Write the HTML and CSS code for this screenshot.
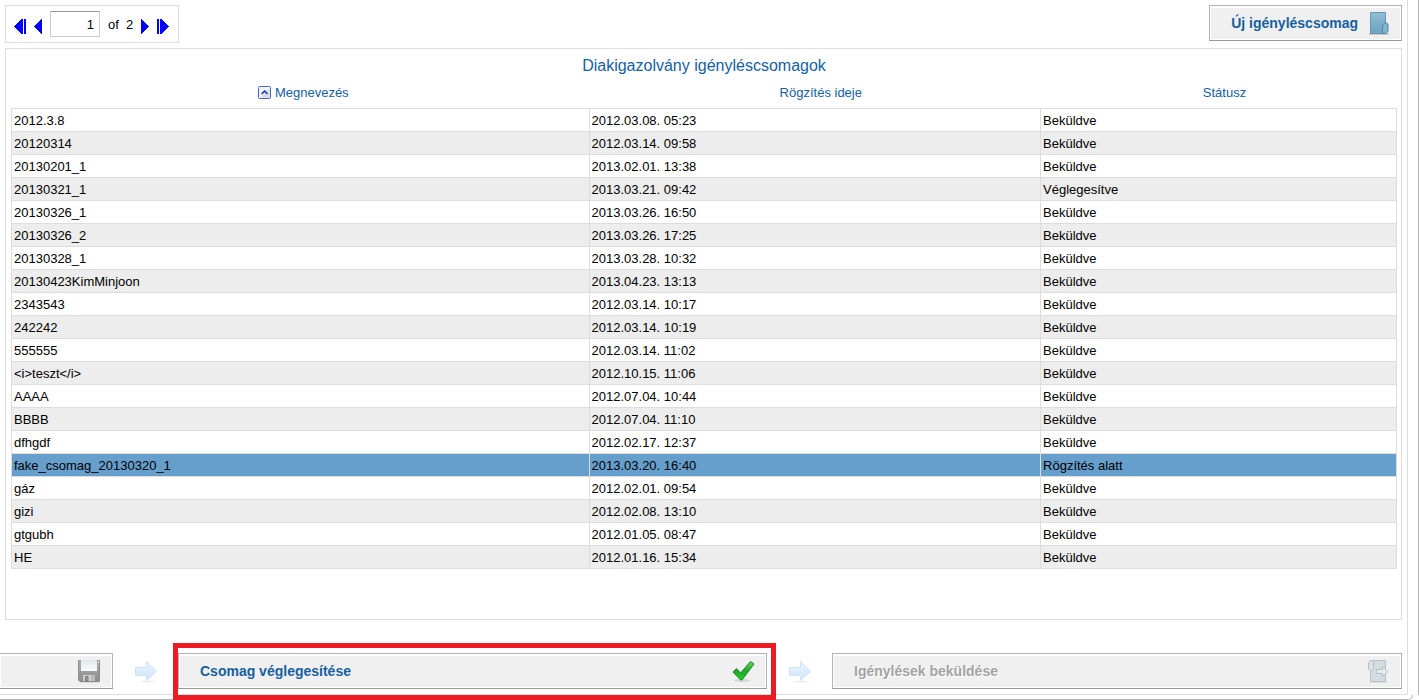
FILE: index.html
```
<!DOCTYPE html>
<html lang="hu">
<head>
<meta charset="utf-8">
<title>Diakigazolvány igényléscsomagok</title>
<link rel="stylesheet" href="styles.css">
</head>
<body>
<div class="window">
  <main class="frame">
    <div class="toolbar">
      <nav class="pager" aria-label="Lapozó">
        <button class="page-btn" aria-label="Első oldal"><svg width="12" height="15" viewBox="0 0 12 15" shape-rendering="crispEdges"><path d="M8 0V15L0 7.500ZM8 0H9V15H8ZM10 0H12V15H10Z"/></svg></button>
        <button class="page-btn" aria-label="Előző oldal"><svg width="8" height="15" viewBox="0 0 8 15" shape-rendering="crispEdges"><path d="M8 0V15L0 7.500Z"/></svg></button>
        <input class="page-input" type="text" value="1" aria-label="Oldal">
        <span class="page-total">of&nbsp; 2</span>
        <button class="page-btn" aria-label="Következő oldal"><svg width="8" height="15" viewBox="0 0 8 15" shape-rendering="crispEdges"><path d="M0 0V15L8 7.500Z"/></svg></button>
        <button class="page-btn" aria-label="Utolsó oldal"><svg width="12" height="15" viewBox="0 0 12 15" shape-rendering="crispEdges"><path d="M0 0H2V15H0ZM3 0H4V15H3ZM4 0V15L12 7.500Z"/></svg></button>
      </nav>
      <button class="action new-package">
        <span>Új igényléscsomag</span>
        <svg class="icon" width="24" height="24" viewBox="0 0 24 24">
          <defs><linearGradient id="door" x1="0" y1="0" x2="0" y2="1"><stop offset="0" stop-color="#8fbdd4"/><stop offset="1" stop-color="#6fa3c2"/></linearGradient></defs>
          <path d="M2 23H22" stroke="#c4bcb8" stroke-width="1.500"/>
          <path d="M3.500 1.500H18.500V22.500H3.500Z" fill="url(#door)" stroke="#6797b5"/>
          <path d="M15.500 22.500V15L18 11.500L21 13V20L19 22.500Z" fill="#86b4cd" stroke="#4f87a8"/>
        </svg>
      </button>
    </div>

    <section class="panel">
      <table class="packages">
        <caption>Diakigazolvány igényléscsomagok</caption>
        <colgroup><col class="col-name"><col class="col-time"><col class="col-status"></colgroup>
        <thead>
          <tr>
            <th scope="col"><button class="sort"><svg width="13" height="13" viewBox="0 0 13 13"><rect x=".5" y=".5" width="12" height="12" rx="1" fill="#f4f4f8" stroke="#4668cf"/><path d="M7 4H12V12H4V9Z" fill="#dcdce4"/><path d="M3.500 8L6.500 5L9.500 8" fill="none" stroke="#1c3aa8" stroke-width="1.500"/></svg>Megnevezés</button></th>
            <th scope="col">Rögzítés ideje</th>
            <th scope="col">Státusz</th>
          </tr>
        </thead>
        <tbody>
          <tr><td>2012.3.8</td><td>2012.03.08. 05:23</td><td>Beküldve</td></tr>
          <tr><td>20120314</td><td>2012.03.14. 09:58</td><td>Beküldve</td></tr>
          <tr><td>20130201_1</td><td>2013.02.01. 13:38</td><td>Beküldve</td></tr>
          <tr><td>20130321_1</td><td>2013.03.21. 09:42</td><td>Véglegesítve</td></tr>
          <tr><td>20130326_1</td><td>2013.03.26. 16:50</td><td>Beküldve</td></tr>
          <tr><td>20130326_2</td><td>2013.03.26. 17:25</td><td>Beküldve</td></tr>
          <tr><td>20130328_1</td><td>2013.03.28. 10:32</td><td>Beküldve</td></tr>
          <tr><td>20130423KimMinjoon</td><td>2013.04.23. 13:13</td><td>Beküldve</td></tr>
          <tr><td>2343543</td><td>2012.03.14. 10:17</td><td>Beküldve</td></tr>
          <tr><td>242242</td><td>2012.03.14. 10:19</td><td>Beküldve</td></tr>
          <tr><td>555555</td><td>2012.03.14. 11:02</td><td>Beküldve</td></tr>
          <tr><td>&lt;i&gt;teszt&lt;/i&gt;</td><td>2012.10.15. 11:06</td><td>Beküldve</td></tr>
          <tr><td>AAAA</td><td>2012.07.04. 10:44</td><td>Beküldve</td></tr>
          <tr><td>BBBB</td><td>2012.07.04. 11:10</td><td>Beküldve</td></tr>
          <tr><td>dfhgdf</td><td>2012.02.17. 12:37</td><td>Beküldve</td></tr>
          <tr class="selected"><td>fake_csomag_20130320_1</td><td>2013.03.20. 16:40</td><td>Rögzítés alatt</td></tr>
          <tr><td>gáz</td><td>2012.02.01. 09:54</td><td>Beküldve</td></tr>
          <tr><td>gizi</td><td>2012.02.08. 13:10</td><td>Beküldve</td></tr>
          <tr><td>gtgubh</td><td>2012.01.05. 08:47</td><td>Beküldve</td></tr>
          <tr><td>HE</td><td>2012.01.16. 15:34</td><td>Beküldve</td></tr>
        </tbody>
      </table>
    </section>

    <div class="steps">
      <button class="action save" aria-label="Mentés">
        <svg class="icon" width="24" height="24" viewBox="0 0 24 24">
          <defs><linearGradient id="disk" x1="0" y1="0" x2="0" y2="1"><stop offset="0" stop-color="#b0b0b0"/><stop offset="1" stop-color="#8c8c8c"/></linearGradient><linearGradient id="label" x1="0" y1="0" x2="0" y2="1"><stop offset="0" stop-color="#dfe7e7"/><stop offset="1" stop-color="#fbfdfd"/></linearGradient></defs>
          <path d="M2 23.500H22" stroke="#ddd"/>
          <path d="M1.500 1.500H22.500V22.500H3L1.500 21Z" fill="url(#disk)" stroke="#8c8c8c"/>
          <path d="M4 1H20V12H4Z" fill="url(#label)"/>
          <path d="M21 3H22" stroke="#eee" stroke-width="2"/>
          <path d="M6 16H18V22H6Z" fill="#d0d0d0"/>
          <path d="M8.500 17.500H11V22H8.500Z" fill="#a0a0a0" stroke="#777"/>
          <path d="M14 16H18V22H14Z" fill="#b9b9b9"/>
        </svg>
      </button>
      <svg class="arrow" width="24" height="24" viewBox="0 0 24 24">
        <defs><linearGradient id="sky" x1="0" y1="0" x2="0" y2="1"><stop offset="0" stop-color="#eef6ff"/><stop offset="1" stop-color="#cce3fb"/></linearGradient></defs>
        <ellipse cx="13" cy="21.500" rx="7" ry="1" fill="#eee"/>
        <path d="M1.500 7.500H12.500V1.500L22.500 11.500L12.500 20.500V15.500H1.500Z" fill="url(#sky)" stroke="#cfe3f8"/>
      </svg>
      <div class="step step-finalize">
        <button class="action">
          <span>Csomag véglegesítése</span>
          <svg class="icon" width="24" height="24" viewBox="0 0 24 24">
            <defs><linearGradient id="tick" x1="0" y1="0" x2="0" y2="1"><stop offset="0" stop-color="#62d862"/><stop offset=".5" stop-color="#23a52b"/><stop offset="1" stop-color="#17d422"/></linearGradient></defs>
            <ellipse cx="10" cy="21.500" rx="8" ry="1.500" fill="#d6d6d6"/>
            <path d="M1 13L4.500 9.500L8.500 14L18.500 2.500L22 5L10 21H8.500Z" fill="url(#tick)" stroke="#238a2b" stroke-linejoin="round"/>
          </svg>
        </button>
        <div class="highlight"></div>
      </div>
      <svg class="arrow" width="24" height="24" viewBox="0 0 24 24">
        <ellipse cx="13" cy="21.500" rx="7" ry="1" fill="#eee"/>
        <path d="M1.500 7.500H12.500V1.500L22.500 11.500L12.500 20.500V15.500H1.500Z" fill="url(#sky)" stroke="#cfe3f8"/>
      </svg>
      <div class="step step-submit">
        <button class="action" disabled>
          <span>Igénylések beküldése</span>
          <svg class="icon" width="24" height="24" viewBox="0 0 24 24">
            <path d="M2 23.500H21" stroke="#dedede"/>
            <path d="M3.500 1.500H18.500V22.500H3.500Z" fill="#d5dce0" stroke="#b3c1c8"/>
            <path d="M3.500 1.500H6.500V9.500L4 12.500L1.500 10V4Z" fill="#dce2e5" stroke="#b3c1c8"/>
            <path d="M9.500 10.500H15.500V7.500L21 12.500L15.500 17.500V14.500H9.500Z" fill="#e7ebed" stroke="#b3c1c8"/>
          </svg>
        </button>
      </div>
    </div>
  </main>
</div>
<div class="window-bottom"></div>
</body>
</html>
```
FILE: styles.css
```
* {
  box-sizing: border-box;
}

body {
  display: flex;
  flex-direction: column;
  min-height: 100vh;
  margin: 0;
  background: #fff;
  color: #000;
  font: 13px/16px "Liberation Sans", Arial, sans-serif;
}

button,
input {
  font: inherit;
  color: inherit;
}

.window {
  display: flex;
  flex: 1;
  padding-right: 10px;
  border-right: 1px solid #b3b3b3;
}

.window-bottom {
  height: 5px;
  margin-right: 6px;
  border-right: 1px solid #b3b3b3;
  border-bottom: 1px solid #b3b3b3;
  border-bottom-right-radius: 5px;
}

.frame {
  display: flex;
  flex: 1;
  flex-direction: column;
  padding: 5px 5px 5px 0;
  border: solid #ddd;
  border-width: 0 1px 1px 0;
}

.toolbar {
  display: flex;
  align-items: flex-start;
  justify-content: space-between;
  margin: 0 0 5px 5px;
}

.pager {
  display: flex;
  align-items: center;
  gap: 8px;
  height: 38px;
  padding: 0 9px 0 8px;
  border: 1px solid #ddd;
}

.page-btn {
  display: flex;
  padding: 4px 0 0;
  border: 0;
  background: none;
  fill: #00f;
}

.page-input {
  width: 50px;
  height: 26px;
  padding: 2px 5px;
  border: 1px solid #ccc;
  border-top-color: #999;
  text-align: right;
}

.page-total {
  padding-top: 2px;
  white-space: nowrap;
}

.action {
  display: flex;
  align-items: center;
  justify-content: space-between;
  width: 100%;
  height: 36px;
  padding: 0 10px 0 21px;
  border: 1px solid #b3b3b3;
  border-bottom-color: #999;
  background: #f0f0f0;
  box-shadow: inset 0 0 0 1px #fff, inset 0 2px 0 #fff;
  color: #15609f;
  font-size: 14px;
  font-weight: bold;
}

.action:disabled {
  color: #a3a3a3;
  text-shadow: 1px 1px 0 #fff;
}

.new-package {
  gap: 9px;
  width: auto;
}

.icon {
  flex: none;
}

.panel {
  flex: 1;
  margin-left: 5px;
  padding: 5px 4px 5px 5px;
  border: 1px solid #ddd;
}

.packages {
  width: 100%;
  table-layout: fixed;
  border-collapse: collapse;
}

.packages caption {
  padding: 2px 0;
  color: #15609f;
  font-size: 16px;
  line-height: 20px;
}

.col-name {
  width: 41.7%;
}

.col-time {
  width: 32.6%;
}

.packages th {
  height: 30px;
  padding: 0 0 0 12px;
  color: #15609f;
  font-weight: normal;
}

.packages th:first-child {
  padding-left: 6px;
}

.sort {
  display: inline-flex;
  align-items: center;
  gap: 4px;
  padding: 2px 0 0;
  border: 0;
  background: none;
}

.packages td {
  height: 23px;
  padding: 4px 2px 2px;
  border: 1px solid #ddd;
}

.packages tbody tr:nth-child(even) {
  background: #ededed;
}

.packages tbody tr.selected:nth-child(n) {
  background: #669ecc;
}

.steps {
  display: flex;
  align-items: center;
  margin-top: 33px;
}

.save {
  flex: none;
  justify-content: flex-end;
  width: 113px;
  padding-right: 11px;
  border-left: 0;
}

.arrow {
  flex: none;
  margin: 2px 20px 0 21px;
}

.step {
  position: relative;
  flex-basis: 0;
}

.step-finalize {
  flex-grow: 589;
}

.step-submit {
  flex-grow: 570;
}

.highlight {
  position: absolute;
  inset: -10px -9px -11px -5px;
  border: 5px solid #ed1c24;
  pointer-events: none;
}
```
